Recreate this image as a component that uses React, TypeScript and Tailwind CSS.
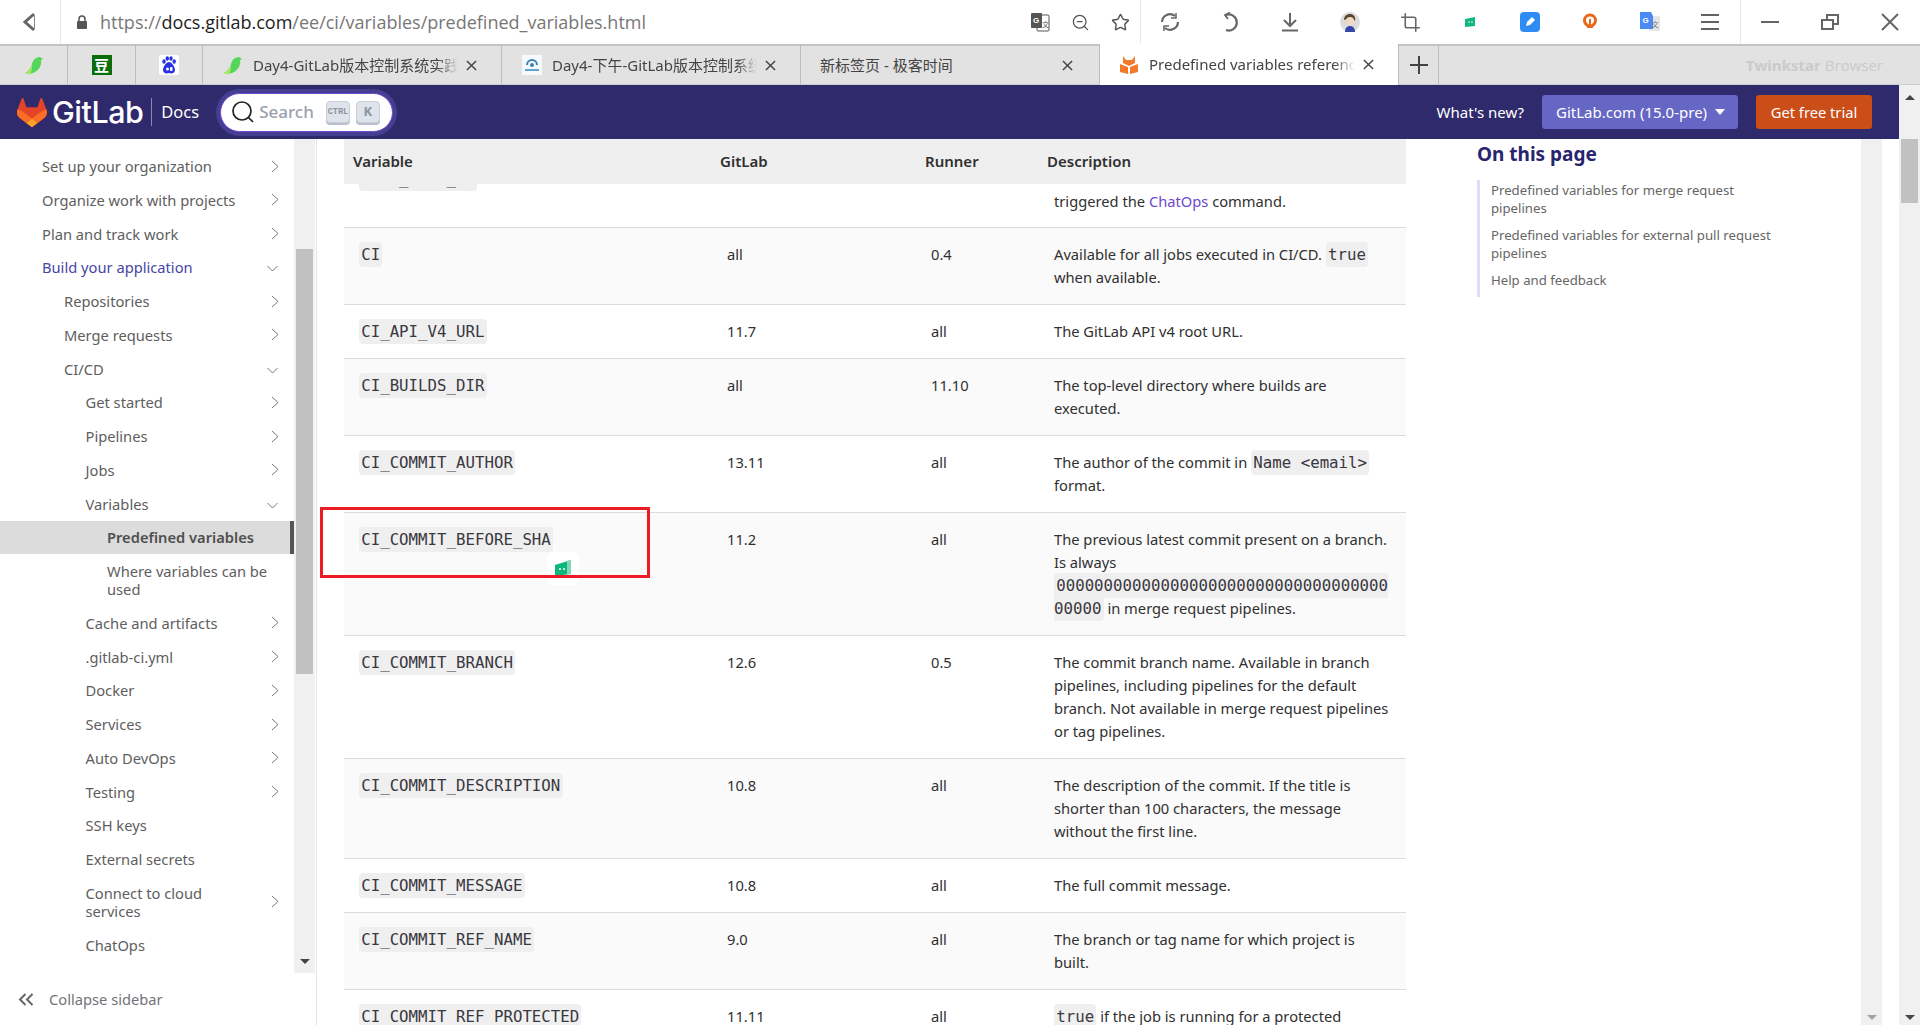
import { ReactNode } from "react";
import { Crop, Star, ZoomOut } from "lucide-react";

const body = "font-['Noto_Sans','Noto_Sans_CJK_SC',sans-serif]";

type NavItem = { label: string; level: number; icon?: "right" | "down"; active?: boolean; selected?: boolean };

const navItems: NavItem[] = [
  { label: "Set up your organization", level: 0, icon: "right" },
  { label: "Organize work with projects", level: 0, icon: "right" },
  { label: "Plan and track work", level: 0, icon: "right" },
  { label: "Build your application", level: 0, icon: "down", active: true },
  { label: "Repositories", level: 1, icon: "right" },
  { label: "Merge requests", level: 1, icon: "right" },
  { label: "CI/CD", level: 1, icon: "down" },
  { label: "Get started", level: 2, icon: "right" },
  { label: "Pipelines", level: 2, icon: "right" },
  { label: "Jobs", level: 2, icon: "right" },
  { label: "Variables", level: 2, icon: "down" },
  { label: "Predefined variables", level: 3, selected: true },
  { label: "Where variables can be used", level: 3 },
  { label: "Cache and artifacts", level: 2, icon: "right" },
  { label: ".gitlab-ci.yml", level: 2, icon: "right" },
  { label: "Docker", level: 2, icon: "right" },
  { label: "Services", level: 2, icon: "right" },
  { label: "Auto DevOps", level: 2, icon: "right" },
  { label: "Testing", level: 2, icon: "right" },
  { label: "SSH keys", level: 2 },
  { label: "External secrets", level: 2 },
  { label: "Connect to cloud services", level: 2, icon: "right" },
  { label: "ChatOps", level: 2 },
  { label: "Troubleshooting", level: 2 },
];

const levelPadding = ["pl-[42px]", "pl-[64px]", "pl-[85.5px]", "pl-[107px]"];

function Code({ children }: { children: ReactNode }) {
  return (
    <code className="font-['DejaVu_Sans_Mono',monospace] text-[15.75px] leading-none bg-[#efefef] rounded-[4px] px-[2.2px] py-[3px] text-[#3a383f] [overflow-wrap:anywhere]">
      {children}
    </code>
  );
}

const rows: { name: string; gitlab: string; runner: string; desc: ReactNode }[] = [
  {
    name: "CI",
    gitlab: "all",
    runner: "0.4",
    desc: (
      <>
        Available for all jobs executed in CI/CD. <Code>true</Code> when available.
      </>
    ),
  },
  { name: "CI_API_V4_URL", gitlab: "11.7", runner: "all", desc: "The GitLab API v4 root URL." },
  { name: "CI_BUILDS_DIR", gitlab: "all", runner: "11.10", desc: "The top-level directory where builds are executed." },
  {
    name: "CI_COMMIT_AUTHOR",
    gitlab: "13.11",
    runner: "all",
    desc: (
      <>
        The author of the commit in <Code>Name &lt;email&gt;</Code> format.
      </>
    ),
  },
  {
    name: "CI_COMMIT_BEFORE_SHA",
    gitlab: "11.2",
    runner: "all",
    desc: (
      <>
        The previous latest commit present on a branch. Is always <Code>0000000000000000000000000000000000000000</Code> in
        merge request pipelines.
      </>
    ),
  },
  {
    name: "CI_COMMIT_BRANCH",
    gitlab: "12.6",
    runner: "0.5",
    desc: "The commit branch name. Available in branch pipelines, including pipelines for the default branch. Not available in merge request pipelines or tag pipelines.",
  },
  {
    name: "CI_COMMIT_DESCRIPTION",
    gitlab: "10.8",
    runner: "all",
    desc: "The description of the commit. If the title is shorter than 100 characters, the message without the first line.",
  },
  { name: "CI_COMMIT_MESSAGE", gitlab: "10.8", runner: "all", desc: "The full commit message." },
  { name: "CI_COMMIT_REF_NAME", gitlab: "9.0", runner: "all", desc: "The branch or tag name for which project is built." },
  {
    name: "CI_COMMIT_REF_PROTECTED",
    gitlab: "11.11",
    runner: "all",
    desc: (
      <>
        <Code>true</Code> if the job is running for a protected reference.
      </>
    ),
  },
];

const tableCols = "grid grid-cols-[367px_205px_122px_368px]";

function GitLabLogo({ className }: { className?: string }) {
  return (
    <svg viewBox="0 0 25 24" className={className}>
      <path
        fill="#E24329"
        d="m24.507 9.5-.034-.09L21.082.562a.896.896 0 0 0-1.694.091l-2.29 7.01H7.825L5.535.653a.898.898 0 0 0-1.694-.09L.451 9.411.416 9.5a6.297 6.297 0 0 0 2.09 7.278l.012.01.03.022 5.16 3.867 2.56 1.935 1.554 1.176a1.051 1.051 0 0 0 1.268 0l1.555-1.176 2.56-1.935 5.197-3.89.014-.01A6.297 6.297 0 0 0 24.507 9.5Z"
      />
      <path
        fill="#FC6D26"
        d="m24.507 9.5-.034-.09a11.44 11.44 0 0 0-4.56 2.051l-7.447 5.632 4.742 3.584 5.197-3.89.014-.01A6.297 6.297 0 0 0 24.507 9.5Z"
      />
      <path
        fill="#FCA326"
        d="m7.707 20.677 2.56 1.935 1.555 1.176a1.051 1.051 0 0 0 1.268 0l1.555-1.176 2.56-1.935-4.743-3.584-4.755 3.584Z"
      />
      <path
        fill="#FC6D26"
        d="M5.01 11.461a11.43 11.43 0 0 0-4.56-2.05L.416 9.5a6.297 6.297 0 0 0 2.09 7.278l.012.01.03.022 5.16 3.867 4.745-3.584-7.444-5.632Z"
      />
    </svg>
  );
}

function Bird() {
  return (
    <svg viewBox="0 0 20 20" className="w-5 h-5">
      <path d="M1 18c3-1 6-5 7-9 1-4 4-7 8-7l3 2-2 1c1 5-2 11-8 13-3 1-6 1-8 0z" fill="#55d55a" />
      <path d="M1 18c3-1 6-5 7-9 0 4 0 7-2 10-2 .4-3.600.2-5-1z" fill="#a8e85e" />
    </svg>
  );
}

function Favicon({ kind }: { kind: string }) {
  if (kind === "bird") return <Bird />;
  if (kind === "douban")
    return (
      <div className="w-5 h-5 bg-[#0b6e0b] text-white text-[15px] leading-5 text-center font-bold font-['Noto_Sans_CJK_SC',sans-serif]">
        豆
      </div>
    );
  if (kind === "baidu")
    return (
      <svg viewBox="0 0 20 20" className="w-5 h-5">
        <rect width="20" height="20" rx="2" fill="#fff" />
        <ellipse cx="5" cy="6.500" rx="1.700" ry="2.300" fill="#2932e1" />
        <ellipse cx="8.300" cy="3.500" rx="1.700" ry="2.300" fill="#2932e1" />
        <ellipse cx="12" cy="3.500" rx="1.700" ry="2.300" fill="#2932e1" />
        <ellipse cx="15.200" cy="6.500" rx="1.700" ry="2.300" fill="#2932e1" />
        <path d="M10 7c3 0 6 5 6 8 0 3-3 4-6 3-3 1-6 0-6-3 0-3 3-8 6-8z" fill="#2932e1" />
        <circle cx="8.500" cy="14" r="1.500" fill="#fff" />
        <rect x="11" y="12" width="2.500" height="4" rx="1" fill="#fff" />
      </svg>
    );
  if (kind === "cloud")
    return (
      <svg viewBox="0 0 20 20" className="w-5 h-5">
        <rect width="20" height="20" fill="#f7fafc" />
        <path d="M5 10a5 5 0 0 1 10 0" fill="none" stroke="#3b82b8" strokeWidth="2" />
        <circle cx="10" cy="10" r="2" fill="#3b82b8" />
        <rect x="3" y="14" width="14" height="2" fill="#5ba6d6" />
      </svg>
    );
  return (
    <svg viewBox="0 0 20 20" className="w-5 h-5">
      <path d="M4 1l3 4h6l3-4v7l-6 3-6-3z" fill="#f47a2b" />
      <path d="M1 9l8 3v7l-8-2zM19 9l-8 3v7l8-2z" fill="#f47a2b" />
    </svg>
  );
}

function Tab({ kind, title }: { kind: string; title: string }) {
  return (
    <div className="w-[299px] shrink-0 flex items-center pl-[20px] border-r border-[#bdbdbd]">
      <div className="mr-[10px] shrink-0">
        <Favicon kind={kind} />
      </div>
      <div className="flex-1 overflow-hidden whitespace-nowrap text-[15px] text-[#444] [mask-image:linear-gradient(to_right,black_90%,transparent)]">
        {title}
      </div>
      <svg viewBox="0 0 12 12" className="w-[11px] h-[11px] ml-[8px] mr-[24px] shrink-0">
        <path d="M1 1l10 10M11 1L1 11" stroke="#444" strokeWidth="1.600" />
      </svg>
    </div>
  );
}

function ToolIcon({ w, children }: { w: string; children: ReactNode }) {
  return <div className={`${w} h-full flex items-center justify-center shrink-0`}>{children}</div>;
}

function Toolbar() {
  return (
    <div className="h-[46px] flex items-stretch bg-white border-b-2 border-[#c4c4c4] shrink-0">
      <div className="w-[61px] flex items-center justify-center border-r border-[#e8e8e8] shrink-0">
        <svg width="16" height="20" viewBox="0 0 16 20">
          <path d="M12 2L3 10l9 8" fill="none" stroke="#666" strokeWidth="3" />
          <path d="M12.500 3v14" stroke="#888" strokeWidth="1" />
        </svg>
      </div>
      <div className="w-[39px] flex items-center justify-end pr-[12px] shrink-0">
        <svg width="12" height="14" viewBox="0 0 12 14">
          <path d="M3 6V4a3 3 0 0 1 6 0v2" fill="none" stroke="#555" strokeWidth="1.500" />
          <rect x="1" y="6" width="10" height="8" rx="1" fill="#555" />
        </svg>
      </div>
      <div className="flex-1 flex items-center font-['Open_Sans',sans-serif] text-[18px] text-[#777] whitespace-nowrap">
        https://<span className="text-[#222]">docs.gitlab.com</span>/ee/ci/variables/predefined_variables.html
      </div>
      <div className="flex items-center w-[900px] shrink-0 justify-start">
        <ToolIcon w="w-[40px]">
          <svg width="20" height="20" viewBox="0 0 20 20">
            <rect x="7" y="3" width="12" height="16" rx="1" fill="#fff" stroke="#555" />
            <rect x="1" y="1" width="11" height="15" rx="1" fill="#555" />
            <text x="3" y="11" fontSize="8" fill="#fff" fontWeight="700" fontFamily="Liberation Sans">G</text>
            <text x="12" y="15" fontSize="7" fill="#555" fontFamily="Noto Sans CJK SC">文</text>
          </svg>
        </ToolIcon>
        <ToolIcon w="w-[40px]">
          <ZoomOut size={19} color="#555" strokeWidth={1.600} />
        </ToolIcon>
        <ToolIcon w="w-[40px]">
          <Star size={19} color="#555" strokeWidth={1.800} />
        </ToolIcon>
        <div className="w-px h-full bg-[#e8e8e8] -mr-px" />
        <ToolIcon w="w-[60px]">
          <svg width="20" height="20" viewBox="0 0 20 20" fill="none" stroke="#666" strokeWidth="2.200">
            <path d="M2 10a8 8 0 0 1 13-6" />
            <path d="M18 10a8 8 0 0 1-13 6" />
            <path d="M16 1v5h-5" strokeWidth="1.500" />
            <path d="M4 19v-5h5" strokeWidth="1.500" />
          </svg>
        </ToolIcon>
        <ToolIcon w="w-[60px]">
          <svg width="20" height="20" viewBox="0 0 20 20" fill="none" stroke="#666" strokeWidth="2.200">
            <path d="M6 3a8 8 0 1 1 0 15" />
            <path d="M10 0.500L5 3l3 4" strokeWidth="1.800" />
          </svg>
        </ToolIcon>
        <ToolIcon w="w-[60px]">
          <svg width="20" height="20" viewBox="0 0 20 20" fill="none" stroke="#666" strokeWidth="2">
            <path d="M10 1v12M4 8l6 6 6-6" />
            <path d="M2 18.500h16" />
          </svg>
        </ToolIcon>
        <ToolIcon w="w-[60px]">
          <svg width="20" height="20" viewBox="0 0 20 20">
            <circle cx="10" cy="10" r="10" fill="#dcdcdc" />
            <path d="M4 8c0-4 3-6 6-6s6 2 5 7l-2-2-6 0z" fill="#5a4630" />
            <circle cx="10" cy="9" r="4" fill="#f3d9c0" />
            <path d="M5 20c0-5 3-6 5-6s5 1 5 6z" fill="#3546a8" />
          </svg>
        </ToolIcon>
        <ToolIcon w="w-[60px]">
          <Crop size={21} color="#666" strokeWidth={1.800} />
        </ToolIcon>
        <ToolIcon w="w-[60px]">
          <svg width="12" height="12" viewBox="0 0 12 12">
            <path d="M1 3l10-2v9l-10 1z" fill="#10b77f" />
            <circle cx="5" cy="6" r="0.800" fill="#fff" />
            <circle cx="8" cy="6" r="0.800" fill="#fff" />
          </svg>
        </ToolIcon>
        <ToolIcon w="w-[60px]">
          <svg width="20" height="20" viewBox="0 0 20 20">
            <rect width="20" height="20" rx="4" fill="#2f8cf5" />
            <path d="M6 14l1-4 5-5 3 3-5 5z" fill="#fff" />
          </svg>
        </ToolIcon>
        <ToolIcon w="w-[60px]">
          <svg width="16" height="18" viewBox="0 0 16 18" fill="none" stroke="#e8681c">
            <path d="M8 13a5.500 5.500 0 1 1 0-11 5.500 5.500 0 0 1 0 11z" strokeWidth="3" />
            <path d="M8 6v7M5 14h6" strokeWidth="2" />
          </svg>
        </ToolIcon>
        <ToolIcon w="w-[60px]">
          <svg width="20" height="20" viewBox="0 0 20 20">
            <rect x="9" y="4" width="11" height="15" fill="#e6e6e6" />
            <path d="M0 0h11l2 4v13H0z" fill="#4a8af4" />
            <text x="2.500" y="11" fontSize="8" fill="#fff" fontWeight="700" fontFamily="Liberation Sans">G</text>
            <text x="11.500" y="15" fontSize="7" fill="#777" fontFamily="Noto Sans CJK SC">文</text>
          </svg>
        </ToolIcon>
        <ToolIcon w="w-[60px]">
          <svg width="18" height="18" viewBox="0 0 18 18" stroke="#5f6368" strokeWidth="2">
            <path d="M0 2h18M0 9h18M0 16h18" />
          </svg>
        </ToolIcon>
        <div className="w-px h-full bg-[#e8e8e8] -mr-px" />
        <ToolIcon w="w-[60px]">
          <svg width="18" height="4" viewBox="0 0 18 4" stroke="#666" strokeWidth="2">
            <path d="M0 2h18" />
          </svg>
        </ToolIcon>
        <ToolIcon w="w-[60px]">
          <svg width="18" height="16" viewBox="0 0 18 16" fill="none" stroke="#666" strokeWidth="2">
            <rect x="1" y="6" width="11" height="9" />
            <path d="M6 6V1h11v9h-5" />
          </svg>
        </ToolIcon>
        <ToolIcon w="w-[59px]">
          <svg width="18" height="18" viewBox="0 0 18 18" stroke="#666" strokeWidth="2">
            <path d="M1 1l16 16M17 1L1 17" />
          </svg>
        </ToolIcon>
      </div>
    </div>
  );
}

function TabStrip() {
  return (
    <div className="h-[39px] flex items-stretch bg-[#e2e2e2] border-b border-[#cdcdcd] shrink-0 relative">
      {["bird", "douban", "baidu"].map((k, i) => (
        <div
          key={k}
          className={`${i === 2 ? "w-[67px]" : "w-[68px]"} flex items-center justify-center border-r border-[#bdbdbd] shrink-0`}
        >
          <Favicon kind={k} />
        </div>
      ))}
      <Tab kind="bird" title="Day4-GitLab版本控制系统实践" />
      <Tab kind="cloud" title="Day4-下午-GitLab版本控制系统" />
      <div className="w-[299px] shrink-0 flex items-center pl-[19px] border-r border-[#bdbdbd]">
        <div className="flex-1 whitespace-nowrap text-[15px] text-[#444]">新标签页 - 极客时间</div>
        <svg viewBox="0 0 12 12" className="w-[11px] h-[11px] mx-[26px] shrink-0">
          <path d="M1 1l10 10M11 1L1 11" stroke="#444" strokeWidth="1.600" />
        </svg>
      </div>
      <div className="w-[299px] shrink-0 flex items-center pl-[19px] bg-white border-r border-[#bdbdbd] -mt-[2px] -mb-px">
        <div className="mr-[10px] shrink-0">
          <Favicon kind="fox" />
        </div>
        <div className="flex-1 overflow-hidden whitespace-nowrap text-[15px] text-[#444] [mask-image:linear-gradient(to_right,black_90%,transparent)]">
          Predefined variables reference
        </div>
        <svg viewBox="0 0 12 12" className="w-[11px] h-[11px] ml-[8px] mr-[24px] shrink-0">
          <path d="M1 1l10 10M11 1L1 11" stroke="#444" strokeWidth="1.600" />
        </svg>
      </div>
      <div className="w-[40px] flex items-center justify-center border-r border-[#bdbdbd] shrink-0">
        <svg width="18" height="18" viewBox="0 0 18 18" stroke="#444" strokeWidth="2">
          <path d="M9 0v18M0 9h18" />
        </svg>
      </div>
      <div className="flex-1 flex items-center justify-end pr-[37px] text-[15px] text-[#cacaca] font-['Open_Sans',sans-serif]">
        <span className="font-bold">Twinkstar</span>
        <span className="ml-[4px]">Browser</span>
      </div>
    </div>
  );
}

function DocsHeader() {
  return (
    <div className="h-[54px] bg-[#2f2a6b] flex items-center shrink-0">
      <GitLabLogo className="w-[30px] h-[29px] ml-[17px]" />
      <div className="ml-[5px] text-white text-[30.5px] font-medium font-['Inter',sans-serif] tracking-[-0.5px]">GitLab</div>
      <div className="w-px h-[28px] bg-[#8d8ab0] ml-[8px]" />
      <div className="ml-[9px] text-white text-[16.5px]">Docs</div>
      <div className="ml-[21px] w-[173px] h-[39px] bg-white rounded-full flex items-center ring-4 ring-[#453f91] border border-[#6e49cb]">
        <svg width="24" height="24" viewBox="0 0 24 24" fill="none" stroke="#222" strokeWidth="1.700" className="ml-[10px] shrink-0">
          <circle cx="11" cy="11" r="9" />
          <path d="M17.500 17.500L22 22" />
        </svg>
        <span className="ml-[4px] text-[17px] text-[#9aa1ad] font-medium">Search</span>
        <span className="ml-[12px] w-[24px] h-[22px] rounded-[4px] bg-[#dfe3ec] border border-[#c8cdd8] shadow-[0_2px_0_#b9bfcc] text-[8.500px] text-[#8c93a0] flex items-center justify-center font-bold font-['Liberation_Mono',monospace]">
          CTRL
        </span>
        <span className="ml-[6px] w-[24px] h-[22px] rounded-[4px] bg-[#dfe3ec] border border-[#c8cdd8] shadow-[0_2px_0_#b9bfcc] text-[13px] text-[#8c93a0] flex items-center justify-center font-bold">
          K
        </span>
      </div>
      <div className="ml-auto text-white text-[15px]">What's new?</div>
      <div className="ml-[18px] w-[196px] h-[34px] rounded-[3px] bg-[#6666c4] text-white text-[15px] flex items-center pl-[14px]">
        GitLab.com (15.0-pre)
        <svg width="10" height="6" viewBox="0 0 10 6" className="ml-[8px]">
          <path d="M0 0h10L5 6z" fill="#fff" />
        </svg>
      </div>
      <div className="ml-[18px] mr-[27px] w-[116px] h-[34px] rounded-[3px] bg-[#cb4e18] text-white text-[14.7px] flex items-center justify-center">
        Get free trial
      </div>
    </div>
  );
}

function Chevron({ dir }: { dir: "right" | "down" }) {
  if (dir === "right")
    return (
      <svg width="8" height="13" viewBox="0 0 8 13" fill="none" stroke="#777" strokeWidth="1" className="mr-[15px] shrink-0">
        <path d="M1 1l6 5.500L1 12" />
      </svg>
    );
  return (
    <svg width="11" height="7" viewBox="0 0 11 7" fill="none" stroke="#777" strokeWidth="1" className="mr-[16px] mt-[3px] shrink-0">
      <path d="M.500 1l5 5 5-5" />
    </svg>
  );
}

function Sidebar() {
  return (
    <aside className="w-[317px] shrink-0 border-r border-[#e3e3e3] flex flex-col">
      <div className="h-[834px] flex overflow-hidden pr-px">
        <div className="w-[294px] shrink-0 pt-[10.3px]">
          {navItems.map((item) => (
            <div
              key={item.label}
              className={`flex items-center justify-between py-[7.875px] text-[14.7px] leading-[18px] ${levelPadding[item.level]} ${
                item.selected ? "bg-[#dcdcdc] border-r-4 border-[#555] font-semibold text-[#4f4f4f]" : item.active ? "text-[#4646a5]" : "text-[#5e5e5e]"
              }`}
            >
              <span className={item.level >= 2 ? "max-w-[170px]" : ""}>{item.label}</span>
              {item.icon && <Chevron dir={item.icon} />}
            </div>
          ))}
        </div>
        <div className="w-[21px] shrink-0 bg-[#f0f0f0] flex flex-col items-center">
          <div className="mt-[110px] w-[17px] h-[425px] bg-[#c1c1c1]" />
          <svg width="10" height="5" viewBox="0 0 10 5" className="mt-auto mb-[9px]">
            <path d="M0 0h10L5 5z" fill="#444" />
          </svg>
        </div>
      </div>
      <div className="flex-1 flex items-center pl-[18px] text-[14.7px] text-[#737278]">
        <svg width="16" height="13" viewBox="0 0 16 13" fill="none" stroke="#666" strokeWidth="2">
          <path d="M7.500 1L2 6.500 7.500 12M14.500 1L9 6.500 14.500 12" />
        </svg>
        <span className="ml-[15px]">Collapse sidebar</span>
      </div>
    </aside>
  );
}

function DocsTable() {
  return (
    <div className="w-[1062px] shrink-0 ml-[27px] text-[14.7px] leading-[23px] text-[#303030]">
      <div className={`${tableCols} h-[45px] bg-[#efefef] items-center font-semibold text-[15px]`}>
        <div className="pl-[9px]">Variable</div>
        <div className="pl-[9px]">GitLab</div>
        <div className="pl-[9px]">Runner</div>
        <div className="pl-[9px]">Description</div>
      </div>
      <div className={`${tableCols} h-[43px] overflow-hidden`}>
        <div className="pl-[15px] -mt-[17px]">
          <Code>CHAT_USER_ID</Code>
        </div>
        <div />
        <div />
        <div className="pl-[16px] pt-[6px]">
          triggered the <span className="text-[#6e49cb]">ChatOps</span> command.
        </div>
      </div>
      {rows.map((row, i) => (
        <div key={row.name} className={`${tableCols} border-t border-[#dcdcdc] py-[15px] ${i % 2 === 0 ? "bg-[#fafafa]" : "bg-white"}`}>
          <div className="pl-[15px]">
            <Code>{row.name}</Code>
          </div>
          <div className="pl-[16px]">{row.gitlab}</div>
          <div className="pl-[15px]">{row.runner}</div>
          <div className="pl-[16px] pr-[13px]">{row.desc}</div>
        </div>
      ))}
    </div>
  );
}

function OnThisPage() {
  return (
    <div className="ml-[71px] w-[384px] shrink-0">
      <h2 className="mt-[3px] text-[19px] leading-[24px] font-bold text-[#28246e]">On this page</h2>
      <ul className="mt-[14px] w-[304px] border-l-[3px] border-[#dcdcf5] pl-[11px] pt-px pb-[8px] flex flex-col gap-[9px] text-[13.2px] leading-[18px] text-[#666]">
        <li>Predefined variables for merge request pipelines</li>
        <li>Predefined variables for external pull request pipelines</li>
        <li>Help and feedback</li>
      </ul>
    </div>
  );
}

export default function App() {
  return (
    <div className={`relative w-[1920px] h-[1025px] overflow-hidden bg-white flex flex-col ${body}`}>
      <Toolbar />
      <TabStrip />
      <div className="flex-1 flex min-h-0">
        <div className="w-[1899px] flex flex-col">
          <DocsHeader />
          <div className="flex-1 flex min-h-0 overflow-hidden">
            <Sidebar />
            <DocsTable />
            <OnThisPage />
            <div className="w-[21px] shrink-0 bg-[#f0f0f0] flex flex-col items-center justify-end">
              <svg width="10" height="5" viewBox="0 0 10 5" className="mb-[5px]">
                <path d="M0 0h10L5 5z" fill="#a0a0a0" />
              </svg>
            </div>
          </div>
        </div>
        <div className="w-[21px] bg-[#f0f0f0] flex flex-col items-center">
          <svg width="10" height="5" viewBox="0 0 10 5" className="mt-[10px]">
            <path d="M0 5h10L5 0z" fill="#444" />
          </svg>
          <div className="mt-[39px] w-[17px] h-[64px] bg-[#c1c1c1]" />
          <svg width="10" height="5" viewBox="0 0 10 5" className="mt-auto mb-[5px]">
            <path d="M0 0h10L5 5z" fill="#444" />
          </svg>
        </div>
      </div>

      {/* annotation drawn on top of the screenshot */}
      <div className="absolute left-[547px] top-[552px] w-[32px] h-[33px] rounded-[6px] bg-white flex items-center justify-center">
        <svg width="18" height="20" viewBox="0 0 18 20">
          <path d="M1 6l16-5v14l-16 2z" fill="#0fb67c" />
          <path d="M13 2l4-1v14l-4 .500z" fill="#7fd8b4" />
          <circle cx="6" cy="10" r="1" fill="#fff" />
          <circle cx="10" cy="10" r="1" fill="#fff" />
        </svg>
      </div>
      <div className="absolute left-[320px] top-[507px] w-[330px] h-[71px] border-[3px] border-[#ed1c24]" />
    </div>
  );
}
